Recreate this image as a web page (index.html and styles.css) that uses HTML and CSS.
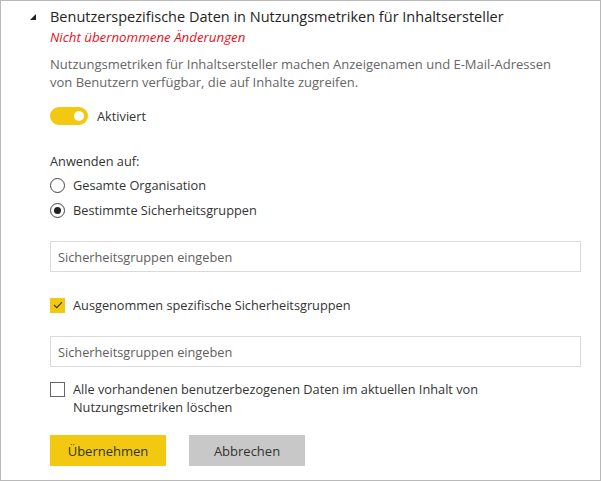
FILE: index.html
```html
<!DOCTYPE html>
<html lang="de">
<head>
<meta charset="utf-8">
<link rel="stylesheet" href="styles.css">
</head>
<body>
<div class="panel">
  <div class="header">
    <span class="caret"></span>
    <div class="titles">
      <div class="title">Benutzerspezifische Daten in Nutzungsmetriken für Inhaltsersteller</div>
      <div class="pending">Nicht übernommene Änderungen</div>
    </div>
  </div>
  <div class="body">
    <p class="desc">Nutzungsmetriken für Inhaltsersteller machen Anzeigenamen und E-Mail-Adressen von Benutzern verfügbar, die auf Inhalte zugreifen.</p>
    <div class="toggle-row">
      <span class="toggle"><span class="knob"></span></span>
      <span class="label">Aktiviert</span>
    </div>
    <div class="apply">Anwenden auf:</div>
    <div class="radio-row"><span class="radio"></span><span class="label">Gesamte Organisation</span></div>
    <div class="radio-row"><span class="radio on"></span><span class="label">Bestimmte Sicherheitsgruppen</span></div>
    <div class="input first">Sicherheitsgruppen eingeben</div>
    <div class="check-row">
      <span class="check on"><svg width="10" height="8" viewBox="0 0 10 8"><path d="M1 4 L3.8 6.6 L9 1.2" fill="none" stroke="#3a3a3a" stroke-width="1.2"/></svg></span>
      <span class="label">Ausgenommen spezifische Sicherheitsgruppen</span>
    </div>
    <div class="input second">Sicherheitsgruppen eingeben</div>
    <div class="check-row multi">
      <span class="check"></span>
      <span class="label">Alle vorhandenen benutzerbezogenen Daten im aktuellen Inhalt von Nutzungsmetriken löschen</span>
    </div>
    <div class="buttons">
      <span class="btn primary">Übernehmen</span>
      <span class="btn secondary">Abbrechen</span>
    </div>
  </div>
</div>
</body>
</html>
```
FILE: styles.css
```css
html, body {
  margin: 0;
  padding: 0;
  background: #ffffff;
}
body {
  font-family: "Open Sans", "Noto Sans", sans-serif;
  color: #333333;
}
.panel {
  box-sizing: border-box;
  width: 601px;
  height: 481px;
  border: 1px solid #b9b9b9;
  background: #fff;
}
.header {
  display: flex;
  padding: 5px 0 0 29px;
}
.caret {
  width: 0;
  height: 0;
  margin-top: 8px;
  margin-right: 14px;
  border-left: 6px solid transparent;
  border-bottom: 6px solid #222;
}
.title {
  font-size: 14.5px;
  line-height: 22px;
  color: #252423;
}
.pending {
  font-size: 13.3px;
  font-style: italic;
  color: #e81123;
  line-height: 18px;
  margin-top: 0;
}
.body {
  padding: 0 20px 0 49px;
}
.desc {
  margin: 9px 0 0;
  font-size: 13px;
  line-height: 18px;
  color: #666666;
  width: 505px;
}
.toggle-row {
  display: flex;
  align-items: center;
  margin-top: 16px;
  gap: 9px;
}
.toggle {
  box-sizing: border-box;
  width: 38px;
  height: 18px;
  border-radius: 9px;
  background: #f2c811;
  display: flex;
  align-items: center;
  justify-content: flex-end;
  padding-right: 4px;
}
.knob {
  width: 10px;
  height: 10px;
  border-radius: 50%;
  background: #fff;
}
.label {
  font-size: 12.75px;
  color: #333;
  line-height: 18px;
}
.apply {
  margin-top: 27px;
  font-size: 12.75px;
  line-height: 18px;
  color: #333;
}
.radio-row {
  display: flex;
  align-items: center;
  gap: 8px;
  margin-top: 6px;
}
.radio-row + .radio-row {
  margin-top: 7px;
}
.radio {
  box-sizing: border-box;
  width: 15px;
  height: 15px;
  border: 1px solid #444;
  border-radius: 50%;
  display: flex;
  align-items: center;
  justify-content: center;
}
.radio.on::after {
  content: "";
  width: 7px;
  height: 7px;
  border-radius: 50%;
  background: #222;
}
.input {
  box-sizing: border-box;
  width: 531px;
  height: 31px;
  border: 1px solid #dadada;
  padding: 0 7px;
  display: flex;
  align-items: center;
  font-size: 12.75px;
  color: #605e5c;
}
.input.first { margin-top: 22px; }
.input.second { margin-top: 22px; }
.check-row {
  display: flex;
  align-items: center;
  gap: 8px;
  margin-top: 24px;
}
.check-row.multi {
  align-items: flex-start;
  margin-top: 13px;
}
.check {
  box-sizing: border-box;
  flex: none;
  width: 15px;
  height: 15px;
  border: 1px solid #666;
  display: flex;
  align-items: center;
  justify-content: center;
}
.check-row.multi .check { margin-top: 2px; }
.check.on {
  background: #f2c811;
  border-color: #f2c811;
}
.check-row.multi .label { width: 470px; }
.buttons {
  display: flex;
  gap: 23px;
  margin-top: 19px;
}
.btn {
  box-sizing: border-box;
  width: 116px;
  height: 31px;
  display: flex;
  align-items: center;
  justify-content: center;
  font-size: 13px;
  color: #333;
}
.btn.primary { background: #f2c811; }
.btn.secondary { background: #c8c8c8; }
```
